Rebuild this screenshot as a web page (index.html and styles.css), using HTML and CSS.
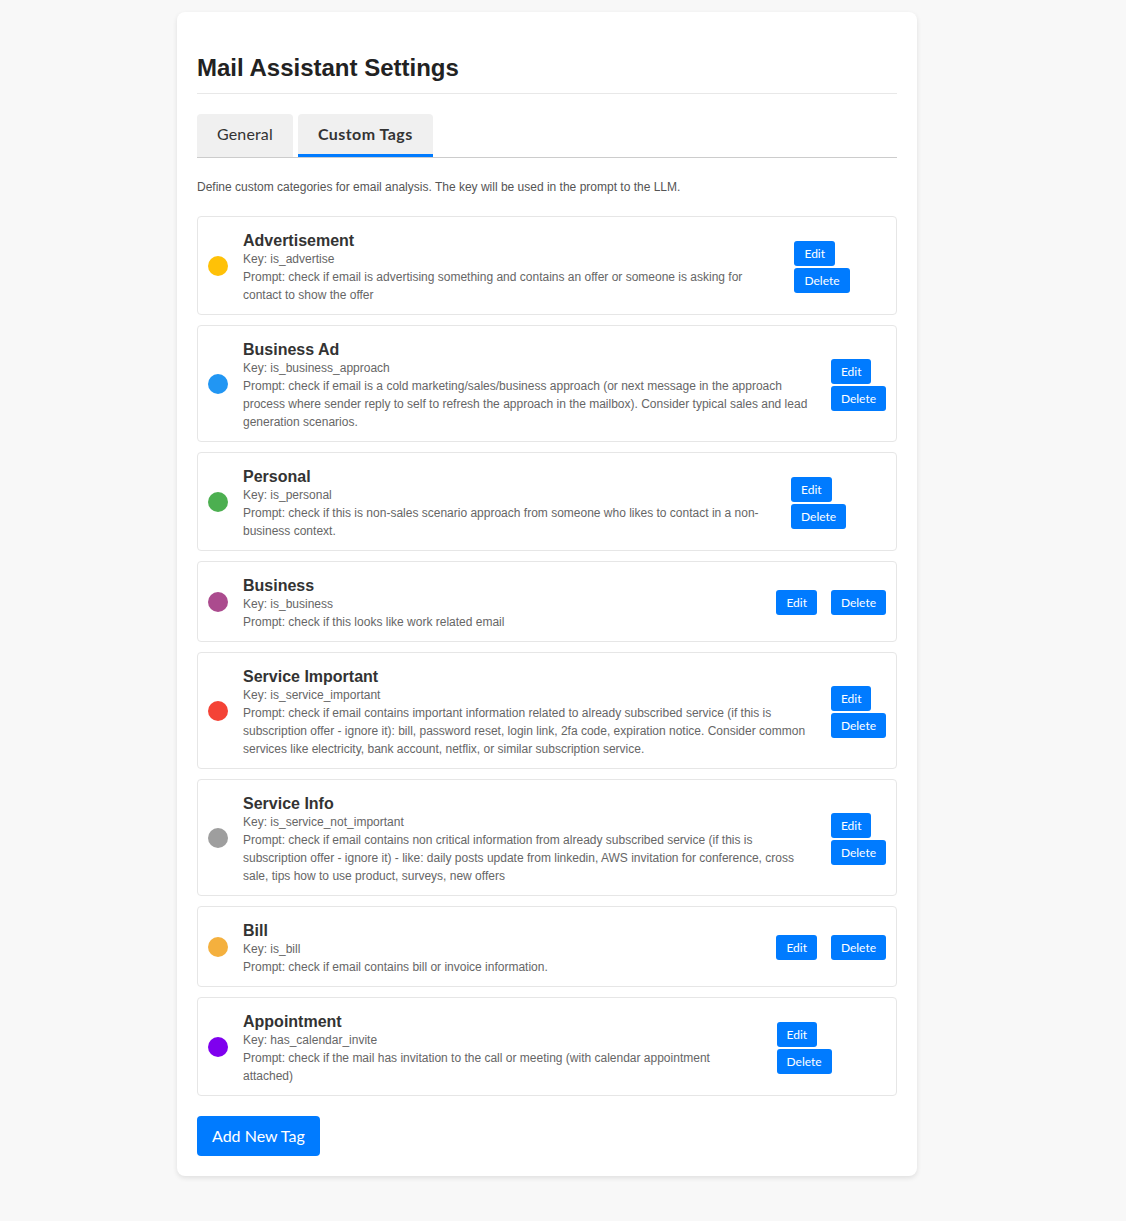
FILE: index.html
```html
<!DOCTYPE html>
<html lang="en">
<head>
<meta charset="utf-8">
<title>Mail Assistant Settings</title>
<link rel="stylesheet" href="styles.css">
</head>
<body>
<div class="container">
  <h1 class="title">Mail Assistant Settings</h1>
  <div class="tabs">
    <button class="tab">General</button>
    <button class="tab active">Custom Tags</button>
  </div>
  <div class="tab-content">
    <p class="desc">Define custom categories for email analysis. The key will be used in the prompt to the LLM.</p>
    <div class="tag-list">
      <div class="tag-item">
        <span class="tag-color c-yellow"></span>
        <div class="tag-info">
          <h3 class="tag-name">Advertisement</h3>
          <div class="tag-line">Key: is_advertise</div>
          <div class="tag-line">Prompt: check if email is advertising something and contains an offer or someone is asking for contact to show the offer</div>
        </div>
        <div class="tag-actions"><button class="btn-small">Edit</button> <button class="btn-small">Delete</button></div>
      </div>
      <div class="tag-item">
        <span class="tag-color c-blue"></span>
        <div class="tag-info">
          <h3 class="tag-name">Business Ad</h3>
          <div class="tag-line">Key: is_business_approach</div>
          <div class="tag-line">Prompt: check if email is a cold marketing/sales/business approach (or next message in the approach process where sender reply to self to refresh the approach in the mailbox). Consider typical sales and lead generation scenarios.</div>
        </div>
        <div class="tag-actions"><button class="btn-small">Edit</button> <button class="btn-small">Delete</button></div>
      </div>
      <div class="tag-item">
        <span class="tag-color c-green"></span>
        <div class="tag-info">
          <h3 class="tag-name">Personal</h3>
          <div class="tag-line">Key: is_personal</div>
          <div class="tag-line">Prompt: check if this is non-sales scenario approach from someone who likes to contact in a non-business context.</div>
        </div>
        <div class="tag-actions"><button class="btn-small">Edit</button> <button class="btn-small">Delete</button></div>
      </div>
      <div class="tag-item">
        <span class="tag-color c-magenta"></span>
        <div class="tag-info">
          <h3 class="tag-name">Business</h3>
          <div class="tag-line">Key: is_business</div>
          <div class="tag-line">Prompt: check if this looks like work related email</div>
        </div>
        <div class="tag-actions"><button class="btn-small">Edit</button> <button class="btn-small">Delete</button></div>
      </div>
      <div class="tag-item">
        <span class="tag-color c-red"></span>
        <div class="tag-info">
          <h3 class="tag-name">Service Important</h3>
          <div class="tag-line">Key: is_service_important</div>
          <div class="tag-line">Prompt: check if email contains important information related to already subscribed service (if this is subscription offer - ignore it): bill, password reset, login link, 2fa code, expiration notice. Consider common services like electricity, bank account, netflix, or similar subscription service.</div>
        </div>
        <div class="tag-actions"><button class="btn-small">Edit</button> <button class="btn-small">Delete</button></div>
      </div>
      <div class="tag-item">
        <span class="tag-color c-grey"></span>
        <div class="tag-info">
          <h3 class="tag-name">Service Info</h3>
          <div class="tag-line">Key: is_service_not_important</div>
          <div class="tag-line">Prompt: check if email contains non critical information from already subscribed service (if this is subscription offer - ignore it) - like: daily posts update from linkedin, AWS invitation for conference, cross sale, tips how to use product, surveys, new offers</div>
        </div>
        <div class="tag-actions"><button class="btn-small">Edit</button> <button class="btn-small">Delete</button></div>
      </div>
      <div class="tag-item">
        <span class="tag-color c-orange"></span>
        <div class="tag-info">
          <h3 class="tag-name">Bill</h3>
          <div class="tag-line">Key: is_bill</div>
          <div class="tag-line">Prompt: check if email contains bill or invoice information.</div>
        </div>
        <div class="tag-actions"><button class="btn-small">Edit</button> <button class="btn-small">Delete</button></div>
      </div>
      <div class="tag-item">
        <span class="tag-color c-purple"></span>
        <div class="tag-info">
          <h3 class="tag-name">Appointment</h3>
          <div class="tag-line">Key: has_calendar_invite</div>
          <div class="tag-line">Prompt: check if the mail has invitation to the call or meeting (with calendar appointment attached)</div>
        </div>
        <div class="tag-actions"><button class="btn-small">Edit</button> <button class="btn-small">Delete</button></div>
      </div>
    </div>
    <button class="btn-primary">Add New Tag</button>
  </div>
</div>
</body>
</html>
```
FILE: styles.css
```css
html, body {
  background: #f8f8f8;
}
body {
  margin: 0;
  padding: 12px 32px 45px 0;
  font-family: "Liberation Sans", Arial, sans-serif;
  font-size: 14px;
  color: #333;
}
.container {
  width: 700px;
  margin: 0 auto;
  padding: 20px;
  background: #fff;
  border-radius: 8px;
  box-shadow: 0 2px 5px rgba(0, 0, 0, 0.1);
}
.title {
  margin: 22px 0 20px;
  padding-bottom: 11px;
  font-size: 24px;
  font-weight: bold;
  color: #222;
  border-bottom: 1px solid #e8e8e8;
}
.tabs {
  display: flex;
  gap: 5px;
  border-bottom: 1px solid #ccc;
}
.tab {
  font-family: Lato, "Noto Sans", sans-serif;
  font-size: 16px;
  line-height: 20px;
  color: #333;
  background: #f0f0f0;
  border: none;
  border-bottom: 3px solid transparent;
  border-radius: 4px 4px 0 0;
  padding: 10px 20px;
  margin: 0;
  letter-spacing: 0.15px;
}
.tab.active {
  font-weight: bold;
  letter-spacing: 0.45px;
  border-bottom-color: #007bff;
}
.tab-content {
  padding-top: 10px;
}
.desc {
  margin: 12px 0 22px;
  font-size: 12px;
  line-height: 14px;
  color: #555;
}
.tag-list {
  display: flex;
  flex-direction: column;
  gap: 10px;
}
.tag-item {
  display: flex;
  align-items: center;
  padding: 10px;
  border: 1px solid #e6e6e6;
  border-radius: 4px;
}
.tag-color {
  flex-shrink: 0;
  width: 20px;
  height: 20px;
  border-radius: 50%;
  margin-right: 15px;
}
.c-yellow { background: #ffc107; }
.c-blue { background: #2196f3; }
.c-green { background: #4caf50; }
.c-magenta { background: #ab4b8e; }
.c-red { background: #f44336; }
.c-grey { background: #9e9e9e; }
.c-orange { background: #f4b03e; }
.c-purple { background: #7f00ee; }
.tag-info {
  flex-grow: 1;
  padding-right: 4px;
}
.tag-name {
  margin: 5px 0 0;
  font-size: 16px;
  font-weight: bold;
  color: #333;
}
.tag-line {
  font-size: 12px;
  line-height: 18px;
  color: #666;
}
.tag-actions {
  line-height: 27px;
}
.btn-small {
  vertical-align: bottom;
  font-family: Lato, "Noto Sans", sans-serif;
  font-size: 12px;
  line-height: 15px;
  color: #fff;
  background: #007bff;
  border: none;
  border-radius: 3px;
  padding: 5px 10px;
  margin-left: 10px;
}
.btn-primary {
  margin-top: 20px;
  font-family: Lato, "Noto Sans", sans-serif;
  font-size: 16px;
  line-height: 20px;
  color: #fff;
  background: #007bff;
  border: none;
  border-radius: 4px;
  padding: 10px 15px;
}
```
